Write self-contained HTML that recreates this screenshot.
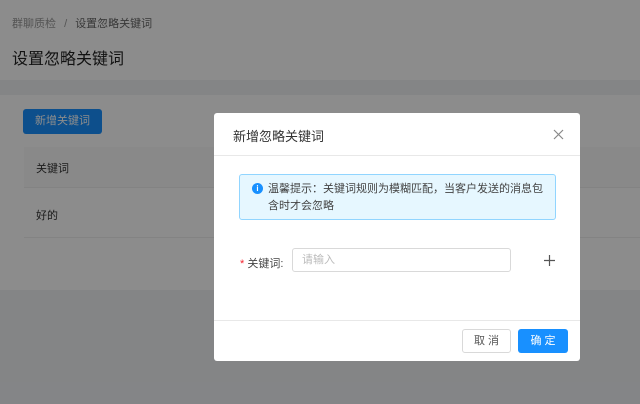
<!DOCTYPE html>
<html><head><meta charset="utf-8"><style>
*{margin:0;padding:0;box-sizing:border-box}
body{width:640px;height:404px;overflow:hidden;background:#f0f2f5;font-family:"Liberation Sans","Noto Sans CJK SC",sans-serif;position:relative;font-size:12px;color:#333}
.abs{position:absolute}
.mask{position:absolute;left:0;top:0;width:640px;height:404px;background:rgba(0,0,0,0.45)}
</style></head><body>
<div class="abs" style="left:0;top:0;width:640px;height:80px;background:#fff"></div>
<div class="abs" style="left:12px;top:15px;font-size:11px;color:#999">群聊质检 <span style="margin:0 5px">/</span> <span style="color:#666">设置忽略关键词</span></div>
<div class="abs" style="left:12px;top:45px;font-size:16px;color:#222">设置忽略关键词</div>
<div class="abs" style="left:0;top:95px;width:640px;height:195px;background:#fff"></div>
<div class="abs" style="left:23px;top:109px;width:79px;height:25px;background:#1890ff;border-radius:3px;color:#fff;font-size:11px;line-height:25px;text-align:center">新增关键词</div>
<div class="abs" style="left:24px;top:147px;width:616px;height:41px;background:#fafafa;border-bottom:1px solid #eee"></div>
<div class="abs" style="left:36px;top:160px;font-size:11px">关键词</div>
<div class="abs" style="left:24px;top:237px;width:616px;height:1px;background:#eee"></div>
<div class="abs" style="left:36px;top:207px;font-size:11px">好的</div>
<div class="mask"></div>
<div class="abs" style="left:214px;top:113px;width:366px;height:248px;background:#fff;border-radius:3px">
 <div class="abs" style="left:19px;top:13px;font-size:13px;color:#333">新增忽略关键词</div>
 <svg class="abs" style="left:339px;top:16px" width="11" height="11"><path d="M1 1L10 10M10 1L1 10" stroke="#888" stroke-width="1.2"/></svg>
 <div class="abs" style="left:0;top:42px;width:366px;height:1px;background:#e8e8e8"></div>
 <div class="abs" style="left:25px;top:61px;width:317px;height:46px;background:#e6f7ff;border:1px solid #91d5ff;border-radius:3px"></div>
 <div class="abs" style="left:38px;top:70px;width:11px;height:11px;border-radius:50%;background:#1890ff;color:#fff;font-size:8px;line-height:11px;text-align:center;font-weight:bold">i</div>
 <div class="abs" style="left:54px;top:68px;width:285px;font-size:11px;line-height:17px;color:#444">温馨提示：关键词规则为模糊匹配，当客户发送的消息包含时才会忽略</div>
 <div class="abs" style="left:26px;top:142px;font-size:11px;color:#444"><span style="color:#f5222d">*</span> 关键词:</div>
 <div class="abs" style="left:78px;top:135px;width:219px;height:24px;border:1px solid #d9d9d9;border-radius:3px;font-size:11px;color:#bbb;line-height:22px;padding-left:9px">请输入</div>
 <svg class="abs" style="left:330px;top:142px" width="11" height="11"><path d="M5.5 0V11M0 5.5H11" stroke="#555" stroke-width="1.2"/></svg>
 <div class="abs" style="left:0;top:207px;width:366px;height:1px;background:#e8e8e8"></div>
 <div class="abs" style="left:248px;top:216px;width:49px;height:24px;border:1px solid #d9d9d9;border-radius:3px;font-size:11px;line-height:22px;text-align:center;color:#555">取 消</div>
 <div class="abs" style="left:304px;top:216px;width:50px;height:24px;background:#1890ff;border-radius:3px;font-size:11px;line-height:24px;text-align:center;color:#fff">确 定</div>
</div>
</body></html>
